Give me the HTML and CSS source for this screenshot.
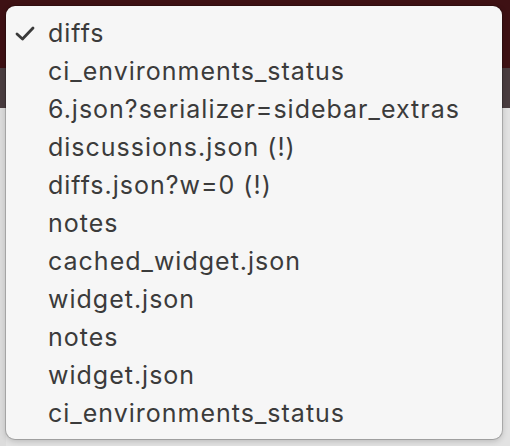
FILE: index.html
```html
<!DOCTYPE html>
<html>
<head>
<meta charset="utf-8">
<link rel="stylesheet" href="styles.css">
</head>
<body>
<div class="backdrop">
  <div class="bg-top"></div>
  <div class="bg-strip"></div>
  <div class="bg-page"></div>
</div>
<div class="menu">
  <ul class="items">
    <li class="item checked"><span class="check"><svg width="20" height="15" viewBox="0 0 20 15"><path d="M2 8 L7.5 13 L18 2" fill="none" stroke="#3a3a3a" stroke-width="2.8" stroke-linecap="round" stroke-linejoin="round"/></svg></span>diffs</li>
    <li class="item">ci_environments_status</li>
    <li class="item">6.json?serializer=sidebar_extras</li>
    <li class="item">discussions.json (!)</li>
    <li class="item">diffs.json?w=0 (!)</li>
    <li class="item">notes</li>
    <li class="item">cached_widget.json</li>
    <li class="item">widget.json</li>
    <li class="item">notes</li>
    <li class="item">widget.json</li>
    <li class="item">ci_environments_status</li>
  </ul>
</div>
</body>
</html>
```

FILE: styles.css
```css
html, body {
  margin: 0;
  padding: 0;
  width: 510px;
  height: 446px;
  overflow: hidden;
}
body {
  position: relative;
  background: #e3e3e3;
  font-family: Inter, "Noto Sans", sans-serif;
}
.backdrop {
  display: flex;
  flex-direction: column;
  height: 446px;
}
.bg-top {
  height: 68px;
  background: #3e1114;
}
.bg-strip {
  height: 40px;
  background: #4a3d40;
}
.bg-page {
  flex: 1;
  background: #e2e2e2;
  border-left: 6px solid #dcdcdc;
}
.menu {
  position: absolute;
  left: 6px;
  top: 6px;
  width: 496px;
  height: 433px;
  box-sizing: border-box;
  background: #f6f6f6;
  border-radius: 9px;
  box-shadow: 0 0 0 1px rgba(0,0,0,0.18), 0 2px 6px rgba(0,0,0,0.2);
  padding-top: 8px;
}
.items {
  list-style: none;
  margin: 0;
  padding: 0;
}
.item {
  position: relative;
  height: 38px;
  line-height: 38px;
  padding-left: 42px;
  font-size: 25px;
  letter-spacing: 1px;
  color: #3b3b3b;
  white-space: nowrap;
}
.check {
  position: absolute;
  left: 9px;
  top: 12px;
  width: 20px;
  height: 15px;
  display: block;
}
.check svg { display: block; }
```
